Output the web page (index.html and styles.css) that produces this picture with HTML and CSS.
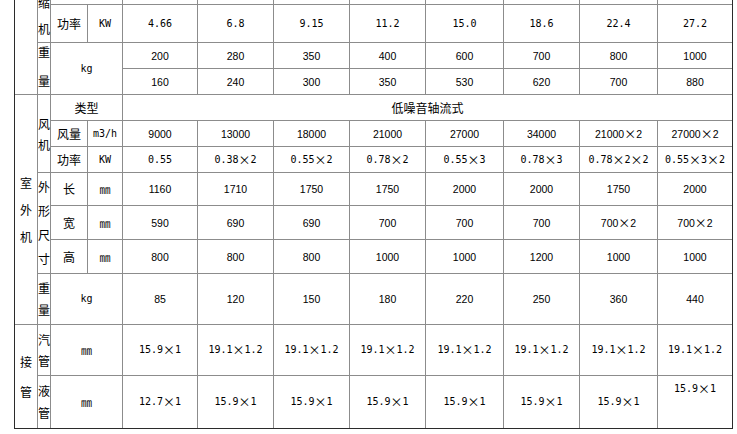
FILE: index.html
```html
<!DOCTYPE html>
<html lang="zh">
<head>
<meta charset="utf-8">
<link rel="stylesheet" href="styles.css">
</head>
<body>
<div class="spec">
  <!-- row 0 (partial) -->
  <div class="cell r4"></div>
  <div class="cell vb r2 compress"><span>缩</span><span>机</span></div>
  <div class="cell c2"></div>
  <div class="cell"></div><div class="cell"></div><div class="cell"></div><div class="cell"></div>
  <div class="cell"></div><div class="cell"></div><div class="cell"></div><div class="cell"></div>
  <!-- row 1 -->
  <div class="cell cjk">功率</div>
  <div class="cell mono">KW</div>
  <div class="cell mono">4.66</div><div class="cell mono">6.8</div><div class="cell mono">9.15</div><div class="cell mono">11.2</div>
  <div class="cell mono">15.0</div><div class="cell mono">18.6</div><div class="cell mono">22.4</div><div class="cell mono">27.2</div>
  <!-- row 2-3 -->
  <div class="cell vb r2 lh29"><span>重</span><span>量</span></div>
  <div class="cell c2 r2 mono">kg</div>
  <div class="cell num">200</div><div class="cell num">280</div><div class="cell num">350</div><div class="cell num">400</div>
  <div class="cell num">600</div><div class="cell num">700</div><div class="cell num">800</div><div class="cell num">1000</div>
  <div class="cell num">160</div><div class="cell num">240</div><div class="cell num">300</div><div class="cell num">350</div>
  <div class="cell num">530</div><div class="cell num">620</div><div class="cell num">700</div><div class="cell num">880</div>
  <!-- row 4: 类型 -->
  <div class="cell va r7 lh27"><span>室</span><span>外</span><span>机</span></div>
  <div class="cell vb r3 lh21"><span>风</span><span>机</span></div>
  <div class="cell c2 cjk">类型</div>
  <div class="cell c8 cjk">低噪音轴流式</div>
  <!-- row 5: 风量 -->
  <div class="cell cjk">风量</div>
  <div class="cell mono">m3/h</div>
  <div class="cell num">9000</div><div class="cell num">13000</div><div class="cell num">18000</div><div class="cell num">21000</div>
  <div class="cell num">27000</div><div class="cell num">34000</div><div class="cell num">21000<span class="x">×</span>2</div><div class="cell num">27000<span class="x">×</span>2</div>
  <!-- row 6: 功率 -->
  <div class="cell cjk">功率</div>
  <div class="cell mono">KW</div>
  <div class="cell mono">0.55</div>
  <div class="cell mono">0.38<span class="x">×</span>2</div>
  <div class="cell mono">0.55<span class="x">×</span>2</div>
  <div class="cell mono">0.78<span class="x">×</span>2</div>
  <div class="cell mono">0.55<span class="x">×</span>3</div>
  <div class="cell mono">0.78<span class="x">×</span>3</div>
  <div class="cell mono">0.78<span class="x">×</span>2<span class="x">×</span>2</div>
  <div class="cell mono">0.55<span class="x">×</span>3<span class="x">×</span>2</div>
  <!-- row 7: 长 -->
  <div class="cell vb r3 lh24"><span>外</span><span>形</span><span>尺</span><span>寸</span></div>
  <div class="cell cjk">长</div>
  <div class="cell unit">㎜</div>
  <div class="cell num">1160</div><div class="cell num">1710</div><div class="cell num">1750</div><div class="cell num">1750</div>
  <div class="cell num">2000</div><div class="cell num">2000</div><div class="cell num">1750</div><div class="cell num">2000</div>
  <!-- row 8: 宽 -->
  <div class="cell cjk">宽</div>
  <div class="cell unit">㎜</div>
  <div class="cell num">590</div><div class="cell num">690</div><div class="cell num">690</div><div class="cell num">700</div>
  <div class="cell num">700</div><div class="cell num">700</div><div class="cell num">700<span class="x">×</span>2</div><div class="cell num">700<span class="x">×</span>2</div>
  <!-- row 9: 高 -->
  <div class="cell cjk">高</div>
  <div class="cell unit">㎜</div>
  <div class="cell num">800</div><div class="cell num">800</div><div class="cell num">800</div><div class="cell num">1000</div>
  <div class="cell num">1000</div><div class="cell num">1200</div><div class="cell num">1000</div><div class="cell num">1000</div>
  <!-- row 10: 重量 -->
  <div class="cell vb lh22"><span>重</span><span>量</span></div>
  <div class="cell c2 mono">kg</div>
  <div class="cell num">85</div><div class="cell num">120</div><div class="cell num">150</div><div class="cell num">180</div>
  <div class="cell num">220</div><div class="cell num">250</div><div class="cell num">360</div><div class="cell num">440</div>
  <!-- row 11: 汽管 -->
  <div class="cell va r2 lh30"><span>接</span><span>管</span></div>
  <div class="cell vb lh21"><span>汽</span><span>管</span></div>
  <div class="cell c2 unit">㎜</div>
  <div class="cell mono">15.9<span class="x">×</span>1</div>
  <div class="cell mono">19.1<span class="x">×</span>1.2</div>
  <div class="cell mono">19.1<span class="x">×</span>1.2</div>
  <div class="cell mono">19.1<span class="x">×</span>1.2</div>
  <div class="cell mono">19.1<span class="x">×</span>1.2</div>
  <div class="cell mono">19.1<span class="x">×</span>1.2</div>
  <div class="cell mono">19.1<span class="x">×</span>1.2</div>
  <div class="cell mono">19.1<span class="x">×</span>1.2</div>
  <!-- row 12: 液管 -->
  <div class="cell vb lh22"><span>液</span><span>管</span></div>
  <div class="cell c2 unit">㎜</div>
  <div class="cell mono">12.7<span class="x">×</span>1</div>
  <div class="cell mono">15.9<span class="x">×</span>1</div>
  <div class="cell mono">15.9<span class="x">×</span>1</div>
  <div class="cell mono">15.9<span class="x">×</span>1</div>
  <div class="cell mono">15.9<span class="x">×</span>1</div>
  <div class="cell mono">15.9<span class="x">×</span>1</div>
  <div class="cell mono">15.9<span class="x">×</span>1</div>
  <div class="cell mono top">15.9<span class="x">×</span>1</div>
</div>
</body>
</html>
```

FILE: styles.css
```css
html, body {
  margin: 0;
  padding: 0;
  background: #ffffff;
}

body {
  font-family: "Noto Sans CJK SC", "Noto Sans", sans-serif;
  font-size: 12px;
  color: #000000;
}

.spec {
  display: grid;
  grid-template-columns: 22px 12px 36px 34px 74px 75px 75px 75px 77px 75px 77px 74px;
  grid-template-rows: 4px 37px 25px 25px 25px 25px 25px 32px 33px 33px 50px 50px 52px;
  gap: 1px;
  width: 717px;
  margin-left: 14px;
  background: #8c8c8c;
  border-left: 1px solid #2b2b2b;
  border-right: 1px solid #2b2b2b;
  border-bottom: 1px solid #2b2b2b;
}

.cell {
  background: #ffffff;
  display: flex;
  align-items: center;
  justify-content: center;
  white-space: nowrap;
  line-height: 14px;
}

.c2 { grid-column: span 2; }
.c8 { grid-column: span 8; }
.r2 { grid-row: span 2; }
.r3 { grid-row: span 3; }
.r4 { grid-row: span 4; }
.r7 { grid-row: span 7; }

.cjk {
  font-family: "Noto Sans CJK SC", sans-serif;
  font-size: 12px;
}

.mono {
  font-family: "DejaVu Sans Mono", "Liberation Mono", monospace;
  font-size: 10px;
}

.num {
  font-family: "Liberation Sans", Arial, sans-serif;
  font-size: 10.5px;
}

.unit {
  font-family: "Noto Sans CJK SC", sans-serif;
  font-size: 11px;
}

.x {
  font-family: "Noto Sans CJK JP", "Noto Sans CJK SC", sans-serif;
  font-size: 12px;
  font-feature-settings: "fwid";
  display: inline-block;
  width: 12px;
  text-align: center;
}

.top {
  align-items: flex-start;
  padding-top: 6px;
}

/* vertical text cells */
.va, .vb {
  flex-direction: column;
  font-family: "Noto Sans CJK SC", sans-serif;
  font-size: 12px;
}

.va { align-items: center; }

.vb {
  align-items: flex-start;
  overflow: visible;
}

.compress {
  justify-content: flex-end;
  line-height: 26px;
}

.lh21 { line-height: 21px; }
.lh22 { line-height: 22px; }
.lh24 { line-height: 24px; }
.lh27 { line-height: 27px; }
.lh29 { line-height: 29px; padding-bottom: 6px; }
.lh30 { line-height: 30px; }
```
